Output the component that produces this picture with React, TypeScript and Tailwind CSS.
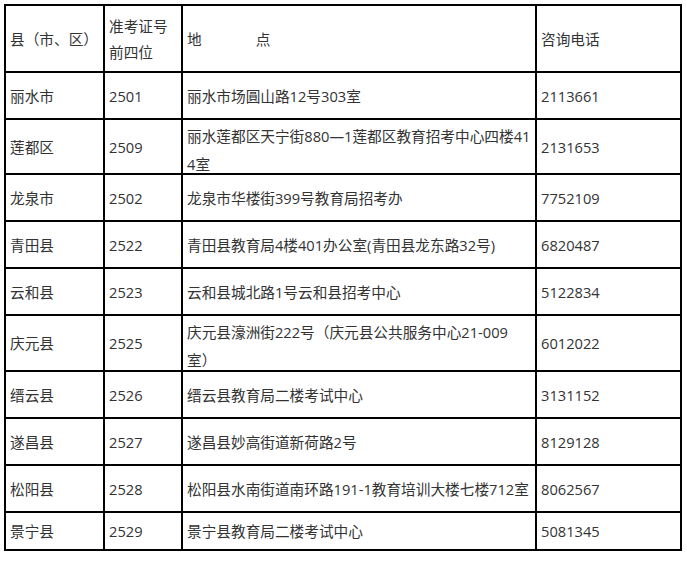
import React from "react";

type Row = {
  county: string;
  code: string;
  place: React.ReactNode;
  phone: string;
  h: string;
  twoLine?: boolean;
};

const rows: Row[] = [
  { county: "丽水市", code: "2501", place: "丽水市场圓山路12号303室", phone: "2113661", h: "h-[47px]" },
  {
    county: "莲都区",
    code: "2509",
    place: (
      <>
        丽水莲都区天宁街880—1莲都区教育招考中心四楼41
        <br />
        4室
      </>
    ),
    phone: "2131653",
    h: "h-[55px]",
    twoLine: true,
  },
  { county: "龙泉市", code: "2502", place: "龙泉市华楼街399号教育局招考办", phone: "7752109", h: "h-[47px]" },
  { county: "青田县", code: "2522", place: "青田县教育局4楼401办公室(青田县龙东路32号)", phone: "6820487", h: "h-[47px]" },
  { county: "云和县", code: "2523", place: "云和县城北路1号云和县招考中心", phone: "5122834", h: "h-[47px]" },
  {
    county: "庆元县",
    code: "2525",
    place: (
      <>
        庆元县濠洲街222号（庆元县公共服务中心21-009
        <br />
        室）
      </>
    ),
    phone: "6012022",
    h: "h-[56px]",
    twoLine: true,
  },
  { county: "缙云县", code: "2526", place: "缙云县教育局二楼考试中心", phone: "3131152", h: "h-[47px]" },
  { county: "遂昌县", code: "2527", place: "遂昌县妙高街道新荷路2号", phone: "8129128", h: "h-[47px]" },
  { county: "松阳县", code: "2528", place: "松阳县水南街道南环路191-1教育培训大楼七楼712室", phone: "8062567", h: "h-[47px]" },
  { county: "景宁县", code: "2529", place: "景宁县教育局二楼考试中心", phone: "5081345", h: "h-[38px]" },
];

const cell = "border-2 border-black px-[4px] py-0 align-middle text-left font-normal whitespace-nowrap";

export default function App() {
  return (
    <div className="w-[687px] h-[561px] bg-white pt-[4px] pl-[4px] text-[14.667px] leading-[28px] text-[#333] font-['Open_Sans','Noto_Sans_CJK_SC',sans-serif]">
      <table className="table-fixed border-collapse w-[678px]">
        <colgroup>
          <col className="w-[99px]" />
          <col className="w-[78px]" />
          <col className="w-[354px]" />
          <col className="w-[145px]" />
        </colgroup>
        <thead>
          <tr className="h-[67px]">
            <th className={cell}>县（市、区）</th>
            <th className={`${cell} leading-[26px]`}>
              准考证号
              <br />
              前四位
            </th>
            <th className={cell}>
              地<span className="ml-[54px]">点</span>
            </th>
            <th className={cell}>咨询电话</th>
          </tr>
        </thead>
        <tbody>
          {rows.map((r) => (
            <tr key={r.code} className={r.h}>
              <td className={cell}>{r.county}</td>
              <td className={cell}>{r.code}</td>
              <td className={cell}>
                {r.twoLine ? <div className="-mb-[6px]">{r.place}</div> : r.place}
              </td>
              <td className={cell}>{r.phone}</td>
            </tr>
          ))}
        </tbody>
      </table>
    </div>
  );
}
